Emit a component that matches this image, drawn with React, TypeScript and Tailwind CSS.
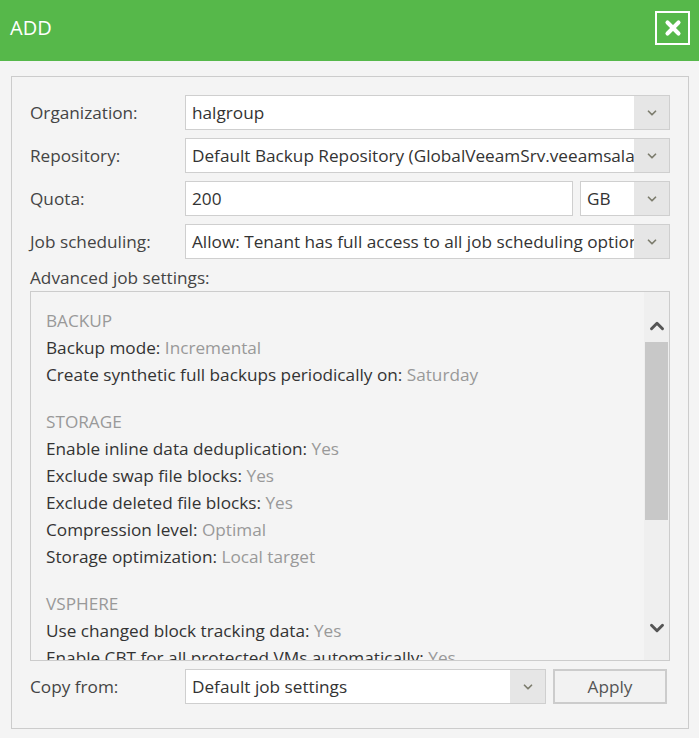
import { ChevronDown, ChevronUp, X } from 'lucide-react';

const font = { fontFamily: '"Open Sans", "Liberation Sans", sans-serif' };

function Select({ value, className }: { value: string; className?: string }) {
  return (
    <div className={`flex h-[35px] min-w-0 border border-[#cfcfcf] bg-white ${className ?? ''}`}>
      <div className="min-w-0 flex-1 overflow-hidden whitespace-nowrap pl-[6px] leading-[33px] text-[#333]">
        {value}
      </div>
      <div className="flex w-[35px] shrink-0 items-center justify-center bg-[#e6e6e6]">
        <ChevronDown className="h-[14px] w-[14px] text-[#7d7d6e]" strokeWidth={3} />
      </div>
    </div>
  );
}

function Row({ label, children }: { label: string; children: React.ReactNode }) {
  return (
    <div className="flex items-center">
      <div className="w-[155px] shrink-0 text-[#444]">{label}</div>
      <div className="flex min-w-0 flex-1 gap-[7px]">{children}</div>
    </div>
  );
}

const sections = [
  {
    title: 'BACKUP',
    items: [
      ['Backup mode:', 'Incremental'],
      ['Create synthetic full backups periodically on:', 'Saturday'],
    ],
  },
  {
    title: 'STORAGE',
    items: [
      ['Enable inline data deduplication:', 'Yes'],
      ['Exclude swap file blocks:', 'Yes'],
      ['Exclude deleted file blocks:', 'Yes'],
      ['Compression level:', 'Optimal'],
      ['Storage optimization:', 'Local target'],
    ],
  },
  {
    title: 'VSPHERE',
    items: [
      ['Use changed block tracking data:', 'Yes'],
      ['Enable CBT for all protected VMs automatically:', 'Yes'],
    ],
  },
];

export default function App() {
  return (
    <div className="h-[738px] w-[699px] bg-[#f4f4f4] text-[17.2px]" style={font}>
      <div className="flex h-[61px] items-center justify-between bg-[#56b84a] pb-[6px] pl-[10px] pr-[9px]">
        <span className="text-[20px] text-white">ADD</span>
        <button className="flex h-[34px] w-[35px] items-center justify-center border-2 border-white">
          <X className="h-[22px] w-[22px] text-white" strokeWidth={4.5} />
        </button>
      </div>

      <div className="pl-[11px] pr-[10px] pt-[15px]">
        <div className="flex h-[653px] flex-col gap-[8px] border border-[#cccccc] pl-[18px] pr-[18px] pt-[18px]">
          <Row label="Organization:">
            <Select value="halgroup" className="flex-1" />
          </Row>
          <Row label="Repository:">
            <Select value="Default Backup Repository (GlobalVeeamSrv.veeamsalab.local)" className="flex-1" />
          </Row>
          <Row label="Quota:">
            <div className="h-[35px] min-w-0 flex-1 border border-[#cfcfcf] bg-white pl-[6px] leading-[33px] text-[#333]">
              200
            </div>
            <Select value="GB" className="w-[90px] shrink-0" />
          </Row>
          <Row label="Job scheduling:">
            <Select
              value="Allow: Tenant has full access to all job scheduling options"
              className="flex-1"
            />
          </Row>

          <div className="flex flex-col gap-[2px]">
            <div className="leading-[22px] text-[#444]">Advanced job settings:</div>
            <div className="flex h-[370px] border border-[#cccccc] bg-[#f4f4f4]">
              <div className="min-w-0 flex-1 overflow-hidden pl-[15px] pt-[15px]">
                {sections.map((s) => (
                  <div key={s.title} className="mb-[20px]">
                    <div className="leading-[27px] text-[#999]">{s.title}</div>
                    {s.items.map(([k, v]) => (
                      <div key={k} className="whitespace-nowrap leading-[27px] text-[#333]">
                        {k} <span className="text-[#999]">{v}</span>
                      </div>
                    ))}
                  </div>
                ))}
              </div>
              <div className="flex w-[25px] shrink-0 flex-col items-center bg-[#efefef]">
                <div className="flex h-[50px] items-end justify-center pb-[5px]">
                  <ChevronUp className="h-[22px] w-[22px] text-[#555]" strokeWidth={3.2} />
                </div>
                <div className="h-[178px] w-[23px] bg-[#c8c8c8]" />
                <div className="flex flex-1 items-end justify-center pb-[21px]">
                  <ChevronDown className="h-[22px] w-[22px] text-[#555]" strokeWidth={3.2} />
                </div>
              </div>
            </div>
          </div>

          <Row label="Copy from:">
            <Select value="Default job settings" className="flex-1" />
            <button className="mr-[3px] h-[35px] w-[114px] shrink-0 border-2 border-[#cccccc] bg-[#f2f2f2] text-[#555]">
              Apply
            </button>
          </Row>
        </div>
      </div>
    </div>
  );
}
